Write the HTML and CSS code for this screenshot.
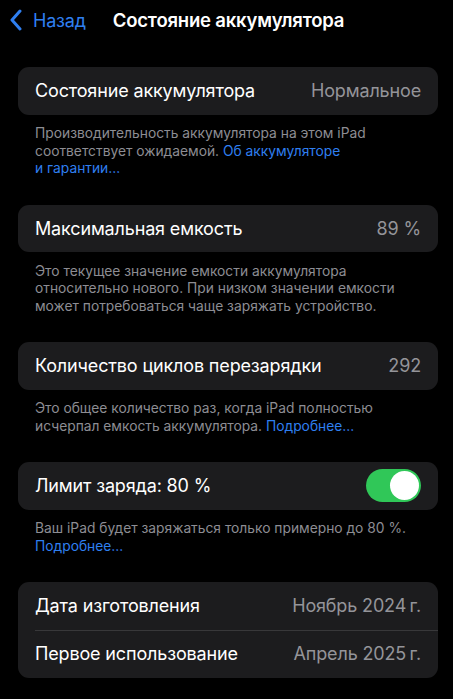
FILE: index.html
```html
<!DOCTYPE html>
<html lang="ru">
<head>
<meta charset="utf-8">
<link rel="stylesheet" href="styles.css">
</head>
<body>
<header class="nav">
  <a class="back">
    <svg class="chev" width="14" height="22" viewBox="0 0 14 22"><path d="M11 2 L3 11 L11 20" fill="none" stroke="#2f7ff0" stroke-width="3" stroke-linecap="round" stroke-linejoin="round"/></svg>
    <span>Назад</span>
  </a>
  <h1 class="title">Состояние аккумулятора</h1>
</header>
<main class="content">
  <section class="group">
    <div class="card">
      <div class="row"><span class="label">Состояние аккумулятора</span><span class="value">Нормальное</span></div>
    </div>
    <p class="foot">Производительность аккумулятора на этом iPad<br>соответствует ожидаемой. <span class="link">Об аккумуляторе<br>и гарантии…</span></p>
  </section>
  <section class="group">
    <div class="card">
      <div class="row"><span class="label">Максимальная емкость</span><span class="value">89 %</span></div>
    </div>
    <p class="foot">Это текущее значение емкости аккумулятора<br>относительно нового. При низком значении емкости<br>может потребоваться чаще заряжать устройство.</p>
  </section>
  <section class="group">
    <div class="card">
      <div class="row"><span class="label">Количество циклов перезарядки</span><span class="value">292</span></div>
    </div>
    <p class="foot">Это общее количество раз, когда iPad полностью<br>исчерпал емкость аккумулятора. <span class="link">Подробнее…</span></p>
  </section>
  <section class="group">
    <div class="card">
      <div class="row"><span class="label">Лимит заряда: 80 %</span><span class="toggle"><span class="knob"></span></span></div>
    </div>
    <p class="foot">Ваш iPad будет заряжаться только примерно до 80 %.<br><span class="link">Подробнее…</span></p>
  </section>
  <section class="group">
    <div class="card">
      <div class="row"><span class="label">Дата изготовления</span><span class="value">Ноябрь 2024&#8239;г.</span></div>
      <div class="row sep"><span class="label">Первое использование</span><span class="value">Апрель 2025&#8239;г.</span></div>
    </div>
  </section>
</main>
</body>
</html>
```

FILE: styles.css
```css
* { box-sizing: border-box; }
html, body { margin: 0; padding: 0; }
body {
  background: #000;
  color: #fff;
  font-family: Inter, "Noto Sans", "Liberation Sans", sans-serif;
  width: 453px;
  height: 699px;
  overflow: hidden;
}
.nav {
  height: 40px;
  display: flex;
  align-items: center;
  padding-left: 9px;
}
.back {
  display: flex;
  align-items: center;
  gap: 10px;
  color: #2f7ff0;
  font-size: 18px;
  letter-spacing: -0.2px;
}
.chev { display: block; }
.title {
  margin: 0 0 0 27px;
  font-size: 18.5px;
  font-weight: 600;
  letter-spacing: -0.2px;
}
.content {
  padding: 27px 15px 0 18px;
}
.group { margin-bottom: 26.5px; }
.card {
  background: #1c1c1e;
  border-radius: 11px;
  overflow: hidden;
}
.row {
  height: 47.5px;
  display: flex;
  align-items: center;
  justify-content: space-between;
  padding: 0 17px;
  font-size: 18px;
  letter-spacing: -0.15px;
  position: relative;
}
.card .row + .row { height: 48.5px; }
.row.sep::before {
  content: "";
  position: absolute;
  left: 17px;
  right: 0;
  top: 0;
  height: 1px;
  background: #38383a;
}
.label { color: #fff; }
.value { color: #949499; }
.foot {
  margin: 0;
  padding: 10.5px 17px 0;
  font-size: 13.8px;
  line-height: 17.7px;
  color: #8d8d93;
}
.link { color: #2f7ff0; }
.toggle {
  width: 55px;
  height: 33px;
  border-radius: 17px;
  background: #30c758;
  position: relative;
}
.knob {
  position: absolute;
  right: 2px;
  top: 2px;
  width: 29px;
  height: 29px;
  border-radius: 50%;
  background: #fff;
}
```
